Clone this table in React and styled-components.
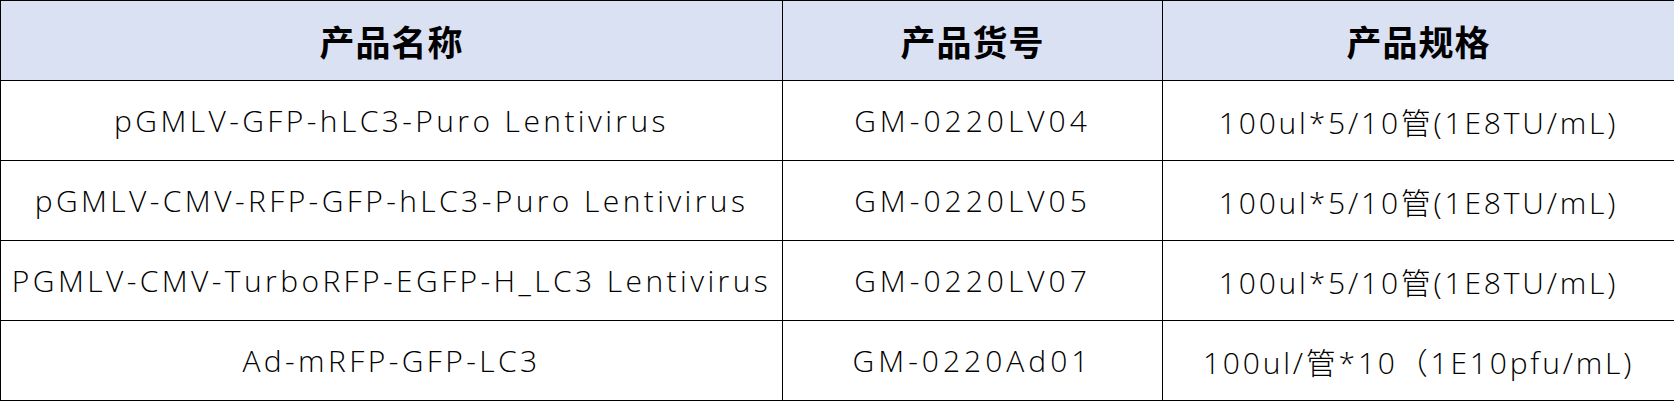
import React from 'react';
import styled, { createGlobalStyle } from 'styled-components';

const GlobalStyle = createGlobalStyle`
  html, body {
    margin: 0;
    padding: 0;
    background: #ffffff;
  }
  body {
    font-family: "Noto Sans CJK SC", "Noto Sans", sans-serif;
    color: #000;
  }
`;

const Table = styled.table`
  width: 1674px;
  border-collapse: collapse;
  table-layout: fixed;
  border: 1.5px solid #000;
`;

const HeadCell = styled.th`
  height: 79px;
  padding: 0;
  background: #dae1f3;
  border: 1.5px solid #000;
  font-size: 35px;
  font-weight: 700;
  text-align: center;
  vertical-align: middle;
  letter-spacing: 1px;
`;

const Cell = styled.td`
  height: 79px;
  padding: 0;
  border: 1.5px solid #000;
  font-family: "Open Sans", "Noto Sans CJK SC", sans-serif;
  font-size: 30px;
  font-weight: 300;
  text-align: center;
  vertical-align: middle;
  white-space: nowrap;
  letter-spacing: ${props => props.$spacing || '1px'};
`;

// letter spacing per column, to get the wide set of the original font
const columns = [
  { key: 'name', title: '产品名称', width: 782, spacing: '3.4px' },
  { key: 'code', title: '产品货号', width: 380, spacing: '4px' },
  { key: 'spec', title: '产品规格', width: 512, spacing: '2.8px' },
];

const products = [
  { name: 'pGMLV-GFP-hLC3-Puro Lentivirus', code: 'GM-0220LV04', spec: '100ul*5/10管(1E8TU/mL)' },
  { name: 'pGMLV-CMV-RFP-GFP-hLC3-Puro Lentivirus', code: 'GM-0220LV05', spec: '100ul*5/10管(1E8TU/mL)' },
  { name: 'PGMLV-CMV-TurboRFP-EGFP-H_LC3 Lentivirus', code: 'GM-0220LV07', spec: '100ul*5/10管(1E8TU/mL)' },
  { name: 'Ad-mRFP-GFP-LC3', code: 'GM-0220Ad01', spec: '100ul/管*10（1E10pfu/mL)' },
];

const App = () => (
  <>
    <GlobalStyle />
    <Table>
      <colgroup>
        {columns.map(col => (
          <col key={col.key} style={{ width: col.width }} />
        ))}
      </colgroup>
      <thead>
        <tr>
          {columns.map(col => (
            <HeadCell key={col.key}>{col.title}</HeadCell>
          ))}
        </tr>
      </thead>
      <tbody>
        {products.map(item => (
          <tr key={item.code}>
            {columns.map(col => (
              <Cell key={col.key} $spacing={col.spacing}>{item[col.key]}</Cell>
            ))}
          </tr>
        ))}
      </tbody>
    </Table>
  </>
);

export default App;
